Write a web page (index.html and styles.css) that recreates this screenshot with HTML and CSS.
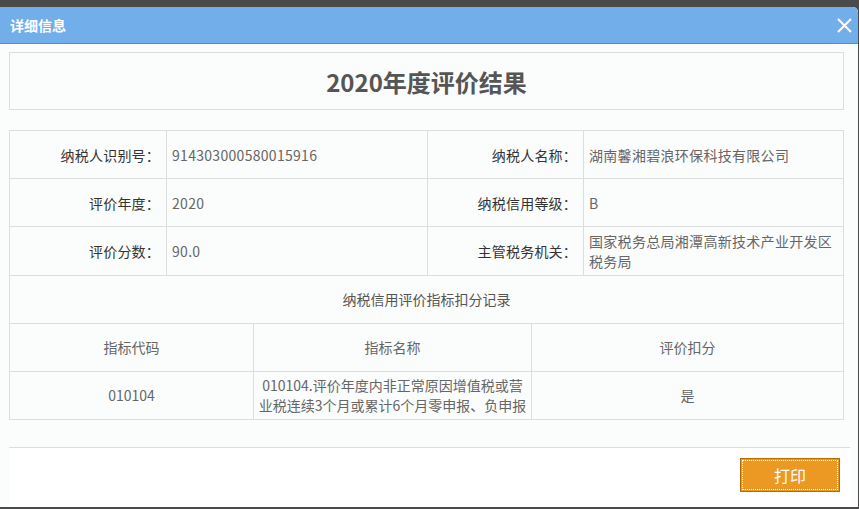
FILE: index.html
```html
<!DOCTYPE html>
<html lang="zh-CN">
<head>
    <meta charset="UTF-8">
    <title>详细信息</title>
    <link rel="stylesheet" href="styles.css">
</head>
<body>
    <div class="dialog">
        <div class="dialog-head">
            <span class="dialog-title">详细信息</span>
            <span class="dialog-close">
                <svg width="15" height="15" viewBox="0 0 15 15"><path d="M1 1L14 14M14 1L1 14" stroke="#fff" stroke-width="2" fill="none"/></svg>
            </span>
        </div>
        <div class="dialog-body">
            <div class="result-title">2020年度评价结果</div>

            <table class="info-table">
                <colgroup>
                    <col style="width:157px"><col style="width:261px"><col style="width:156px"><col>
                </colgroup>
                <tr>
                    <td class="label">纳税人识别号：</td>
                    <td class="value">914303000580015916</td>
                    <td class="label">纳税人名称：</td>
                    <td class="value">湖南馨湘碧浪环保科技有限公司</td>
                </tr>
                <tr>
                    <td class="label">评价年度：</td>
                    <td class="value">2020</td>
                    <td class="label">纳税信用等级：</td>
                    <td class="value">B</td>
                </tr>
                <tr>
                    <td class="label">评价分数：</td>
                    <td class="value">90.0</td>
                    <td class="label">主管税务机关：</td>
                    <td class="value">国家税务总局湘潭高新技术产业开发区税务局</td>
                </tr>
            </table>

            <table class="score-table">
                <colgroup>
                    <col style="width:244px"><col style="width:278px"><col>
                </colgroup>
                <tr>
                    <td colspan="3">纳税信用评价指标扣分记录</td>
                </tr>
                <tr>
                    <td>指标代码</td>
                    <td>指标名称</td>
                    <td>评价扣分</td>
                </tr>
                <tr>
                    <td>010104</td>
                    <td>010104.评价年度内非正常原因增值税或营业税连续3个月或累计6个月零申报、负申报</td>
                    <td>是</td>
                </tr>
            </table>

            <div class="dialog-foot">
                <button class="print-btn">打印</button>
            </div>
        </div>
    </div>
</body>
</html>
```

FILE: styles.css
```css
* { margin: 0; padding: 0; box-sizing: border-box; }
body { background: #4a4a4a; font-family: "Noto Sans CJK SC", "Microsoft YaHei", sans-serif; font-size: 14px; color: #555; padding-top: 7px; }
.dialog { width: 858px; height: 500px; background: #fbfcfc; border-top-right-radius: 5px; overflow: hidden; display: flex; flex-direction: column; }
.dialog-head { height: 37px; background: #72aeea; border-bottom: 1px solid #4f90d4; display: flex; align-items: center; justify-content: space-between; padding: 0 6px 0 10px; border-top-right-radius: 5px; }
.dialog-title { color: #fff; font-weight: bold; font-size: 14px; }
.dialog-close { display: flex; align-items: center; }
.dialog-body { flex: 1; display: flex; flex-direction: column; padding: 8px 8px 0 9px; }
.result-title { width: 835px; height: 58px; border: 1px solid #ddd; display: flex; align-items: center; justify-content: center; font-size: 24px; font-weight: bold; color: #555; }
table { width: 835px; border-collapse: collapse; table-layout: fixed; }
td { border: 1px solid #ddd; height: 48px; line-height: 20px; padding: 3px 4px; }
.info-table { margin-top: 20px; }
.info-table tr:last-child td { border-bottom: none; }
.label { text-align: right; color: #333; padding-right: 6px; letter-spacing: 0.2px; }
.value { color: #666; padding-left: 5px; letter-spacing: 0.3px; }
.score-table td { text-align: center; color: #666; }
.score-table tr:first-child td { color: #555; }
.dialog-foot { margin-top: 27px; flex: 1; background: #fff; border-top: 1px solid #ddd; display: flex; justify-content: flex-end; align-items: flex-start; padding: 10px 10px 0 0; }
.print-btn { width: 100px; height: 34px; background: #ec9924; border: 1px solid #b06c0c; color: #fff; font-family: inherit; font-size: 16px; outline: 1px dotted #fff; outline-offset: -3px; cursor: pointer; }
```
